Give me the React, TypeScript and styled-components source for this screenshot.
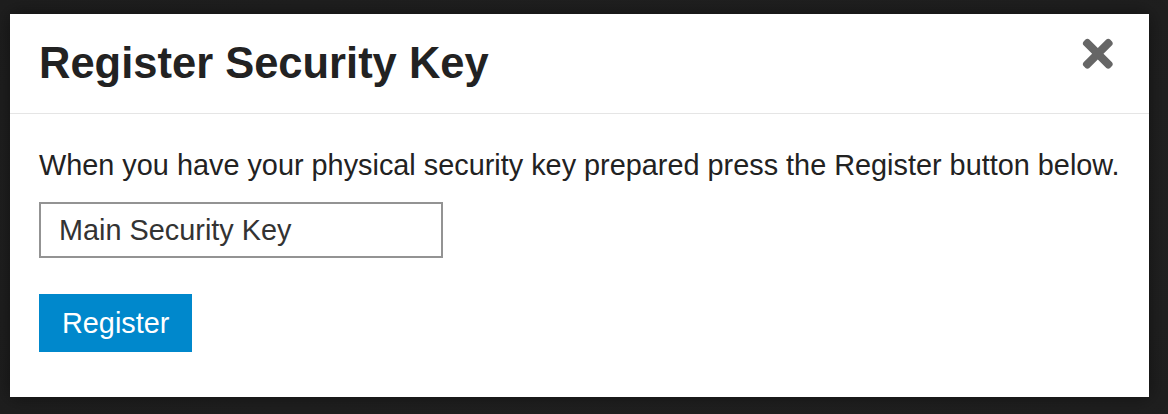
import React from "react";
import styled, { createGlobalStyle } from "styled-components";
import { FaTimes } from "react-icons/fa";

const GlobalStyle = createGlobalStyle`
	html, body {
		margin: 0;
		padding: 0;
		background-color: #202020;
	}
	* {
		box-sizing: border-box;
	}
`;

const App: React.FC = () => {
	return (
		<Page>
			<GlobalStyle />
			<Modal>
				<Header>
					<Title>Register Security Key</Title>
					<CloseButton aria-label="Close">
						<FaTimes size={43.6} />
					</CloseButton>
				</Header>
				<Body>
					<Message>
						When you have your physical security key prepared press the
						Register button below.
					</Message>
					<KeyInput defaultValue="Main Security Key" />
					<RegisterButton>Register</RegisterButton>
				</Body>
			</Modal>
		</Page>
	);
};

export default App;

const Page = styled.div`
	width: 1168px;
	height: 414px;
	padding: 14px 0 0 10px;
	background: radial-gradient(ellipse at 60% 50%, #232323 0%, #1e1e1e 100%);
	font-family: "Liberation Sans", Arial, sans-serif;
`;

const Modal = styled.div`
	width: 1139px;
	background-color: #fff;
	box-shadow: 0 0 18px rgba(0, 0, 0, 0.45);
	display: flex;
	flex-direction: column;
`;

const Header = styled.div`
	display: flex;
	justify-content: space-between;
	align-items: flex-start;
	padding: 25px 30px 26px 29px;
	border-bottom: 1px solid #e5e5e5;
`;

const Title = styled.h1`
	margin: 0;
	font-size: 43.5px;
	line-height: 48px;
	font-weight: 700;
	color: #222;
`;

const CloseButton = styled.button`
	display: flex;
	padding: 0;
	margin: -7px -1px 0 0;
	border: none;
	background: none;
	color: #666;
	cursor: pointer;
`;

const Body = styled.div`
	display: flex;
	flex-direction: column;
	align-items: flex-start;
	padding: 30px 29px 45px;
`;

const Message = styled.p`
	margin: 0 0 16px;
	font-size: 28.85px;
	line-height: 42px;
	color: #222;
`;

const KeyInput = styled.input`
	width: 404px;
	height: 56px;
	padding: 0 18px;
	margin: 0 0 36px;
	border: 2px solid #939393;
	border-radius: 0;
	font-family: inherit;
	font-size: 28.85px;
	color: #333;
	outline: none;
`;

const RegisterButton = styled.button`
	height: 58px;
	padding: 0 23px;
	border: none;
	border-radius: 0;
	background-color: #0088cc;
	color: #fff;
	font-family: inherit;
	font-size: 28.85px;
	cursor: pointer;
`;
